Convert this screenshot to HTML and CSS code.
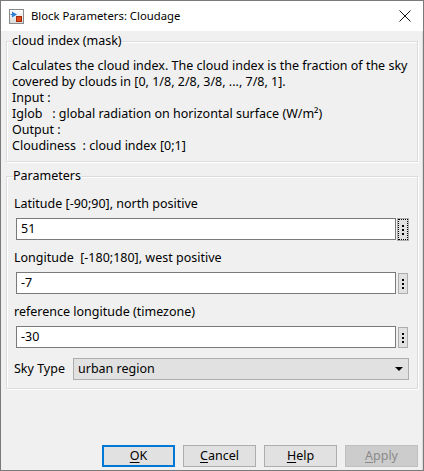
FILE: index.html
```html
<!DOCTYPE html>
<html>
<head>
<meta charset="utf-8">
<link rel="stylesheet" href="styles.css">
</head>
<body>
<div class="window">
  <div class="titlebar">
    <svg class="appicon" width="15" height="15" viewBox="0 0 15 15">
      <defs>
        <linearGradient id="g" x1="0" y1="0" x2="0" y2="1">
          <stop offset="0" stop-color="#fdfdfd"/>
          <stop offset="1" stop-color="#d9d9d9"/>
        </linearGradient>
      </defs>
      <rect x="0.5" y="0.5" width="14" height="14" fill="url(#g)" stroke="#8a8a8a"/>
      <path d="M3 2.5 L3 8.5 L8 5.5 Z" fill="#2a7fd4"/>
      <line x1="1.5" y1="5.5" x2="3" y2="5.5" stroke="#2a7fd4"/>
      <rect x="7.5" y="7.5" width="5" height="5" fill="#e0491c" stroke="#a32b0a"/>
    </svg>
    <span class="title">Block Parameters: Cloudage</span>
    <svg class="close" width="12" height="12" viewBox="0 0 12 12">
      <path d="M0.5 0.5 L11.5 11.5 M11.5 0.5 L0.5 11.5" stroke="#111" stroke-width="1"/>
    </svg>
  </div>
  <div class="content">
    <fieldset class="group mask">
      <legend>cloud index (mask)</legend>
      <div class="desc">
        <div>Calculates the cloud index. The cloud index is the fraction of the sky</div>
        <div>covered by clouds in [0, 1/8, 2/8, 3/8, ..., 7/8, 1].</div>
        <div>Input :</div>
        <div>Iglob &nbsp;&nbsp;: global radiation on horizontal surface (W/m²)</div>
        <div>Output :</div>
        <div>Cloudiness &nbsp;: cloud index [0;1]</div>
      </div>
    </fieldset>
    <fieldset class="group params">
      <legend>Parameters</legend>
      <div class="param">
        <div class="label">Latitude [-90;90], north positive</div>
        <div class="row">
          <div class="edit">51</div>
          <div class="dots focus"><i></i><i></i><i></i></div>
        </div>
      </div>
      <div class="param">
        <div class="label">Longitude &nbsp;[-180;180], west positive</div>
        <div class="row">
          <div class="edit">-7</div>
          <div class="dots"><i></i><i></i><i></i></div>
        </div>
      </div>
      <div class="param">
        <div class="label">reference longitude (timezone)</div>
        <div class="row">
          <div class="edit">-30</div>
          <div class="dots"><i></i><i></i><i></i></div>
        </div>
      </div>
      <div class="combo-row">
        <span class="clabel">Sky Type</span>
        <div class="combo">
          <span>urban region</span>
          <span class="arrow"></span>
        </div>
      </div>
    </fieldset>
    <div class="spacer"></div>
    <div class="buttons">
      <div class="btn default"><u>O</u>K</div>
      <div class="btn"><u>C</u>ancel</div>
      <div class="btn"><u>H</u>elp</div>
      <div class="btn disabled"><u>A</u>pply</div>
    </div>
  </div>
</div>
</body>
</html>
```
FILE: styles.css
```css
* { box-sizing: border-box; }
html, body {
  margin: 0;
  padding: 0;
  width: 424px;
  height: 471px;
  overflow: hidden;
  background: #f0f0f0;
}
body {
  font-family: "Noto Sans", "Open Sans", sans-serif;
  font-size: 12.5px;
  line-height: 16px;
  color: #000;
}
.window {
  width: 424px;
  height: 471px;
  border: 1px solid #7a7a7a;
  display: flex;
  flex-direction: column;
  background: #f0f0f0;
}
.titlebar {
  height: 30px;
  background: #fff;
  display: flex;
  align-items: center;
  padding-left: 8px;
  flex: none;
}
.appicon { flex: none; margin-top: 0; }
.title {
  margin-left: 7px;
  font-size: 11.3px;
  color: #000;
  flex: 1;
}
.close { margin-right: 12px; flex: none; }
.content {
  flex: 1;
  display: flex;
  flex-direction: column;
  padding: 2px 4px 2px 5px;
  border-right: 1px solid #dadada;
}
.group {
  margin: 0;
  border: 1px solid #dcdcdc;
  box-shadow: inset 1px 1px 0 #fff, 1px 1px 0 #fff;
  padding: 0;
  min-width: 0;
  width: 412px;
}
.group legend {
  padding: 0;
  margin-left: 5px;
  line-height: 16px;
}
.mask .desc {
  padding: 9px 6px 7px 5px;
}
.params {
  margin-top: 6px;
  padding: 12px 0 8px 0;
}
.params legend { margin-left: 6px; }
.param { padding-left: 7px; margin-bottom: 10px; }
.label { line-height: 16px; }
.row {
  display: flex;
  align-items: flex-start;
  margin-top: 6px;
}
.edit {
  width: 380px;
  height: 22px;
  margin-left: 2px;
  border: 1px solid #7a7a7a;
  background: #fff;
  padding: 2px 4px;
  line-height: 16px;
}
.dots {
  width: 10px;
  height: 21px;
  margin-left: 2px;
  margin-top: 1px;
  background: #e1e1e1;
  border: 1px solid #adadad;
  display: flex;
  flex-direction: column;
  align-items: center;
  justify-content: center;
  gap: 2px;
}
.dots i {
  display: block;
  width: 2px;
  height: 2px;
  background: #000;
}
.dots.focus {
  border: 1px dotted #000;
  outline: 1px solid #adadad;
  outline-offset: 0;
}
.combo-row {
  display: flex;
  align-items: center;
  padding-left: 7px;
}
.clabel { width: 59px; }
.combo {
  width: 336px;
  height: 22px;
  background: #e1e1e1;
  border: 1px solid #adadad;
  display: flex;
  align-items: center;
  justify-content: space-between;
  padding: 0 5px 0 4px;
}
.arrow {
  width: 0;
  height: 0;
  border-left: 4px solid transparent;
  border-right: 4px solid transparent;
  border-top: 4px solid #000;
}
.spacer { flex: 1; }
.buttons {
  display: flex;
  justify-content: flex-end;
  gap: 8px;
  padding-right: 0;
  margin-bottom: 1px;
}
.btn {
  width: 73px;
  height: 22px;
  background: #e1e1e1;
  border: 1px solid #adadad;
  text-align: center;
  line-height: 20px;
}
.btn u { text-decoration: underline; text-underline-offset: 2px; }
.btn.default {
  border: 2px solid #0078d7;
  line-height: 18px;
}
.btn.disabled {
  background: #cccccc;
  border-color: #bfbfbf;
  color: #8a8a8a;
}
```
